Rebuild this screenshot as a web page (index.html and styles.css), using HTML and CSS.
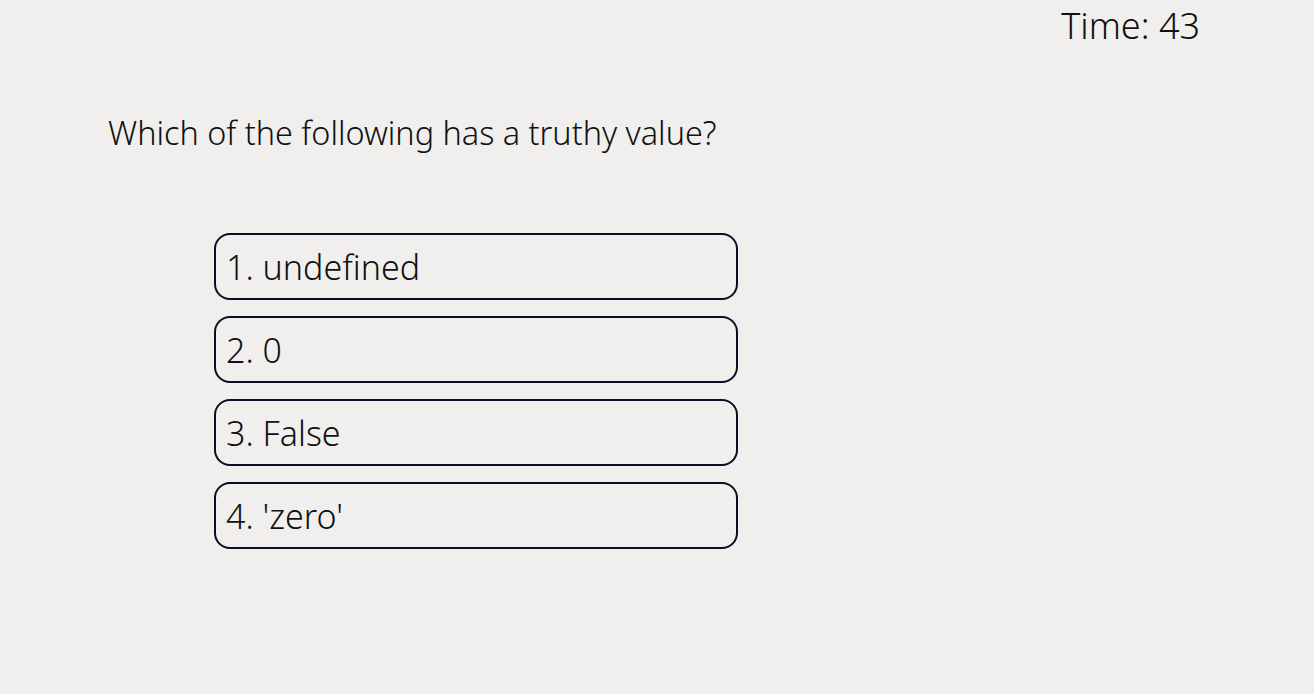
FILE: index.html
```html
<!DOCTYPE html>
<html lang="en">
<head>
<meta charset="utf-8">
<title>Quiz</title>
<link rel="stylesheet" href="styles.css">
</head>
<body>
<header class="topbar">
  <div class="timer">Time: 43</div>
</header>
<main class="quiz">
  <h1 class="question">Which of the following has a truthy value?</h1>
  <div class="options">
    <button class="option">1. undefined</button>
    <button class="option">2. 0</button>
    <button class="option">3. False</button>
    <button class="option">4. 'zero'</button>
  </div>
</main>
</body>
</html>
```
FILE: styles.css
```css
html, body {
  margin: 0;
  padding: 0;
  background: #f0efed;
  color: #111;
  font-family: "Noto Sans", "Open Sans", sans-serif;
  font-weight: 300;
}
.topbar {
  display: flex;
  justify-content: flex-end;
  padding: 2px 114px 0 0;
  height: 48px;
}
.timer {
  font-size: 36px;
  line-height: 48px;
}
.quiz {
  padding-left: 108px;
}
.question {
  margin: 60px 0 0 0;
  font-size: 32.4px;
  font-weight: 300;
  line-height: 44px;
}
.options {
  margin: 79px 0 0 106px;
  width: 524px;
  display: flex;
  flex-direction: column;
  gap: 16px;
}
.option {
  box-sizing: border-box;
  height: 67px;
  text-align: left;
  padding: 0 10px;
  border: 2px solid #0e0b26;
  border-radius: 16px;
  background: transparent;
  font-family: inherit;
  font-weight: 300;
  font-size: 34px;
  color: #111;
}
```
